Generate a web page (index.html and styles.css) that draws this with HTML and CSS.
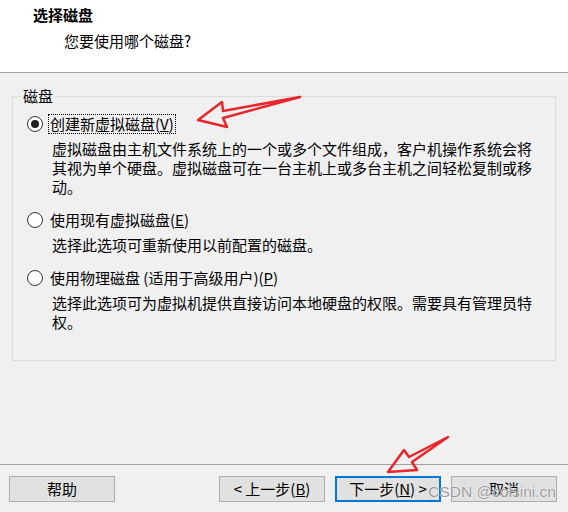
FILE: index.html
```html
<!DOCTYPE html>
<html lang="zh-CN">
<head>
<meta charset="utf-8">
<title>新建虚拟机向导</title>
<link rel="stylesheet" href="styles.css">
</head>
<body>
<div class="wizard">
  <header class="head">
    <div class="title">选择磁盘</div>
    <div class="subtitle">您要使用哪个磁盘?</div>
  </header>
  <main class="content">
    <fieldset class="group">
      <legend class="legend">磁盘</legend>
      <div class="option first">
        <span class="radio checked"></span>
        <span class="label focus">创建新虚拟磁盘(<u>V</u>)</span>
      </div>
      <p class="desc">虚拟磁盘由主机文件系统上的一个或多个文件组成，客户机操作系统会将其视为单个硬盘。虚拟磁盘可在一台主机上或多台主机之间轻松复制或移动。</p>
      <div class="option">
        <span class="radio"></span>
        <span class="label">使用现有虚拟磁盘(<u>E</u>)</span>
      </div>
      <p class="desc">选择此选项可重新使用以前配置的磁盘。</p>
      <div class="option">
        <span class="radio"></span>
        <span class="label">使用物理磁盘 (适用于高级用户)(<u>P</u>)</span>
      </div>
      <p class="desc">选择此选项可为虚拟机提供直接访问本地硬盘的权限。需要具有管理员特权。</p>
    </fieldset>
  </main>
  <footer class="foot">
    <button class="btn">帮助</button>
    <span class="spacer"></span>
    <button class="btn">&lt; 上一步(<u>B</u>)</button>
    <button class="btn primary">下一步(<u>N</u>) &gt;</button>
    <button class="btn">取消</button>
  </footer>
  <div class="watermark">CSDN @colsini.cn</div>
  <svg class="arrows" width="568" height="512" viewBox="0 0 568 512">
    <polygon points="198,120 222,102 223,111 300,97 223,118 227,127"/>
    <polygon points="388,472 404,450 409,457 448,437 412,462 417,470"/>
  </svg>
</div>
</body>
</html>
```
FILE: styles.css
```css
* { box-sizing: border-box; }
html, body { margin: 0; padding: 0; }
body {
  width: 568px;
  height: 512px;
  overflow: hidden;
  font-family: "Noto Sans CJK SC", "Noto Sans", sans-serif;
  font-size: 15px;
  color: #000;
  background: #f0f0f0;
}
.wizard {
  position: relative;
  width: 568px;
  height: 512px;
  display: flex;
  flex-direction: column;
}
.head {
  height: 73px;
  background: #fff;
  border-bottom: 1px solid #a0a0a0;
  padding-top: 5px;
}
.title {
  font-weight: bold;
  line-height: 20px;
  padding-left: 33px;
}
.subtitle {
  line-height: 20px;
  margin-top: 6px;
  padding-left: 64px;
}
.content {
  flex: 1;
  padding: 13px 12px 0 12px;
}
.group {
  margin: 0;
  padding: 0 0 29px 0;
  border: 1px solid #dcdcdc;
  min-width: 0;
}
.legend {
  margin-left: 8px;
  padding: 0 2px;
  line-height: 20px;
}
.option {
  display: flex;
  align-items: center;
  height: 20px;
  margin-top: 14px;
  padding-left: 14px;
}
.option.first { margin-top: 8px; }
.radio {
  width: 16px;
  height: 16px;
  border: 1px solid #333;
  border-radius: 50%;
  background: #fff;
  display: flex;
  align-items: center;
  justify-content: center;
  flex: none;
}
.radio.checked::after {
  content: "";
  width: 8px;
  height: 8px;
  border-radius: 50%;
  background: #222;
}
.label {
  margin-left: 5px;
  line-height: 18px;
  padding: 0 1px;
  border: 1px dotted transparent;
}
.label.focus { border-color: #000; }
.desc {
  margin: 5px 0 0 0;
  padding-left: 39px;
  padding-right: 20px;
  line-height: 19px;
}
.foot {
  height: 48px;
  border-top: 1px solid #a0a0a0;
  display: flex;
  align-items: flex-start;
  gap: 10px;
  padding: 11px 11px 0 9px;
}
.spacer { flex: 1; }
.btn {
  width: 106px;
  height: 26px;
  border: 1px solid #adadad;
  background: #e1e1e1;
  font-family: inherit;
  font-size: 15px;
  color: #000;
  padding: 0;
  line-height: 22px;
}
.btn.primary { border: 2px solid #0078d7; }
.watermark {
  position: absolute;
  right: 12px;
  top: 483px;
  font-family: "Liberation Sans", Arial, sans-serif;
  font-size: 15.5px;
  color: rgba(120, 120, 120, 0.75);
  text-shadow: 0 0 1px #fff, 0 0 1px #fff;
  pointer-events: none;
}
.arrows {
  position: absolute;
  left: 0;
  top: 0;
  pointer-events: none;
}
.arrows polygon {
  fill: none;
  stroke: #e8262c;
  stroke-width: 2.5;
  stroke-linejoin: round;
}
```
